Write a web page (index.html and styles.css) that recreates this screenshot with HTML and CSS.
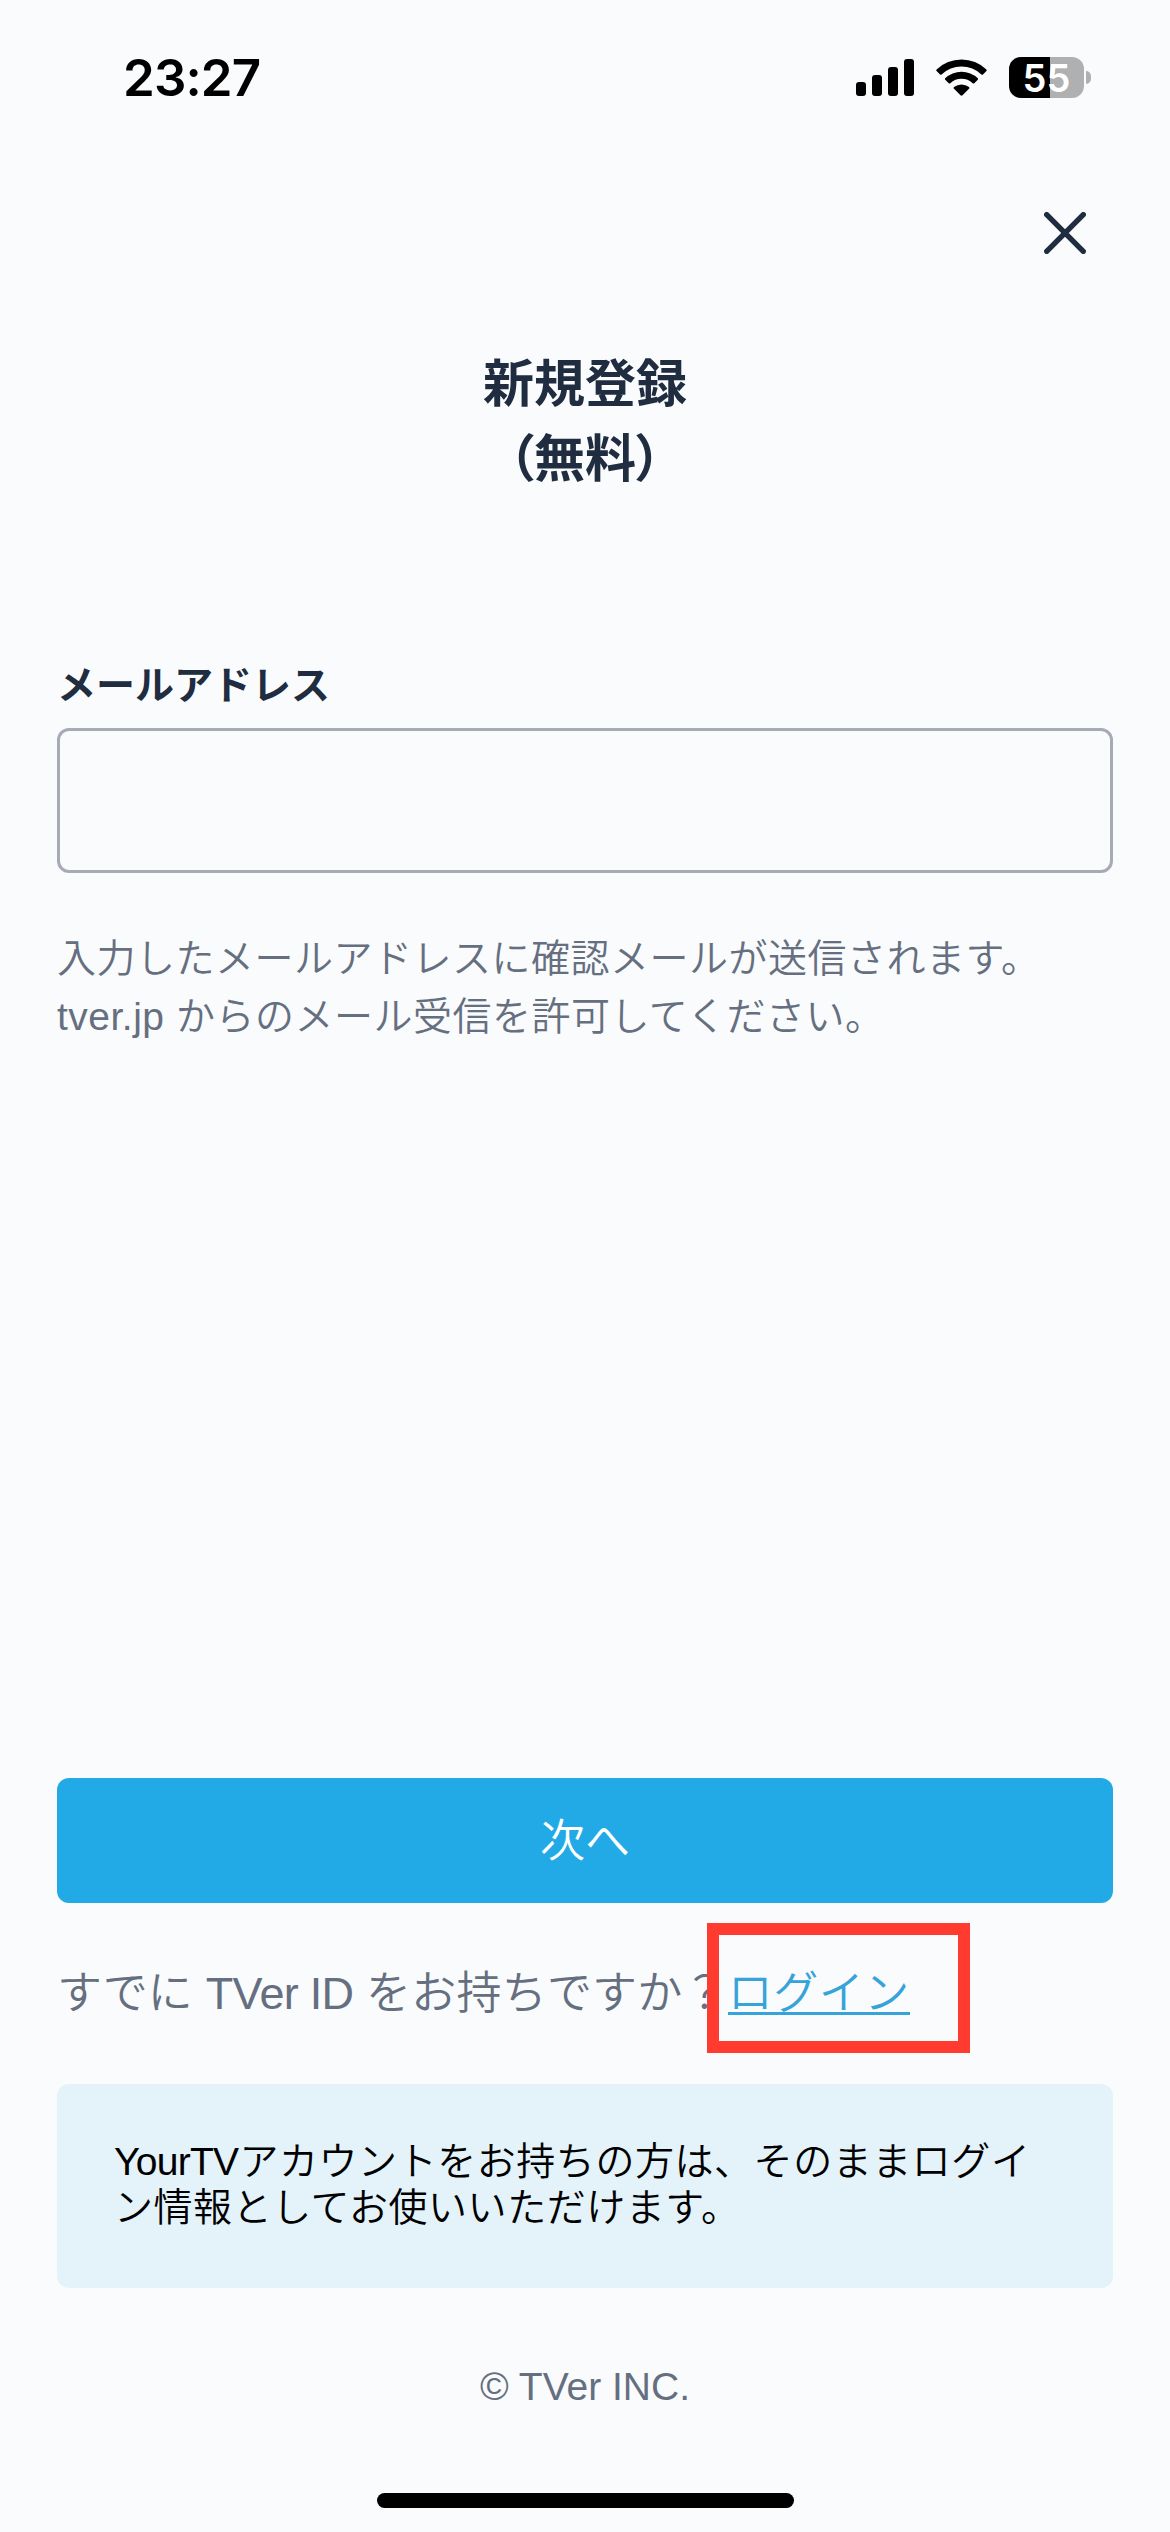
FILE: index.html
```html
<!DOCTYPE html>
<html lang="ja">
<head>
<meta charset="utf-8">
<title>新規登録</title>
<link rel="stylesheet" href="styles.css">
</head>
<body>
<div class="screen">
  <header class="status">
    <span class="time">23:27</span>
    <div class="indicators">
      <svg class="signal" width="58" height="37" viewBox="0 0 58 37">
        <rect x="0" y="23" width="10" height="14" rx="3"/>
        <rect x="16" y="16" width="10" height="21" rx="3"/>
        <rect x="32" y="8" width="10" height="29" rx="3"/>
        <rect x="48" y="0" width="10" height="37" rx="3"/>
      </svg>
      <svg class="wifi" width="51" height="37" viewBox="0 0 51 37">
        <path d="M0.6 10.4Q-0.1 11.2 0.6 12L4 15.5Q4.8 16.2 5.6 15.5A28.6 28.6 0 0 1 45.4 15.5Q46.2 16.2 47 15.5L50.4 12Q51.1 11.2 50.4 10.4A36 36 0 0 0 0.6 10.4Z"/>
        <path d="M9.2 19.2Q8.5 20 9.2 20.8L12.7 24.2Q13.5 24.9 14.3 24.2A16.5 16.5 0 0 1 36.7 24.2Q37.5 24.9 38.3 24.2L41.8 20.8Q42.5 20 41.8 19.2A24 24 0 0 0 9.2 19.2Z"/>
        <path d="M18 28.1Q17.2 29 18 29.8L24.5 36.3Q25.5 37.2 26.5 36.3L33 29.8Q33.8 29 33 28.1A12 12 0 0 0 18 28.1Z"/>
      </svg>
      <div class="battery"><span class="level">55</span><span class="nub"></span></div>
    </div>
  </header>

  <div class="toolbar">
    <button class="close" aria-label="閉じる">
      <svg width="42" height="42" viewBox="0 0 42 42"><path d="M2.7 2.7L39.3 39.3M39.3 2.7L2.7 39.3"/></svg>
    </button>
  </div>

  <main class="content">
    <h1 class="title">新規登録<br><span class="paren-open">（</span>無料<span class="paren-close">）</span></h1>
    <label class="label" for="email">メールアドレス</label>
    <input class="field" id="email" type="email">
    <p class="hint">入力したメールアドレスに確認メールが送信されます。<br>tver.jp からのメール受信を許可してください。</p>
    <button class="next">次へ</button>
    <p class="login"><span>すでに <span class="latin">TVer ID</span> をお持ちですか？</span><a class="link" href="#">ログイン<span class="marker"></span></a></p>
    <div class="info"><span class="latin">YourTV</span>アカウントをお持ちの方は、そのままログイン情報としてお使いいただけます。</div>
  </main>
  <footer class="footer">© TVer INC.</footer>
  <div class="home"></div>
</div>
</body>
</html>
```
FILE: styles.css
```css
* { box-sizing: border-box; }
body { margin: 0; background: #fafbfd; }
.screen {
  width: 1170px;
  height: 2532px;
  display: flex;
  flex-direction: column;
  font-family: "Liberation Sans", "Noto Sans CJK JP", sans-serif;
  font-size: 39px;
  font-weight: 350;
  color: #656f80;
  overflow: hidden;
}
.status {
  height: 155px;
  padding: 0 79px 0 123px;
  display: flex;
  justify-content: space-between;
  align-items: center;
  color: #000;
  font-family: Inter, sans-serif;
}
.time { font-size: 51px; font-weight: 600; letter-spacing: -0.9px; }
.indicators { display: flex; align-items: center; }
.wifi { margin-left: 22px; }
.battery { display: flex; align-items: center; gap: 2px; margin-left: 22px; }
.level {
  width: 75px;
  height: 41px;
  border-radius: 12px;
  background: linear-gradient(90deg, #000 41px, #aeb0b1 41px);
  color: #fff;
  font-size: 38px;
  font-weight: 600;
  line-height: 42px;
  text-align: center;
}
.nub { width: 5px; height: 13px; border-radius: 0 6px 6px 0; background: #aeb0b1; }
.toolbar { display: flex; justify-content: flex-end; padding: 57px 84px 0; }
.close { width: 42px; height: 42px; padding: 0; border: 0; background: none; }
.close svg { display: block; fill: none; stroke: #202c40; stroke-width: 5.4; stroke-linecap: round; }
.content { padding: 0 57px; display: flex; flex-direction: column; }
.title {
  margin: 93px 0 0;
  font-size: 51px;
  line-height: 75px;
  font-weight: 700;
  text-align: center;
  color: #202c40;
}
.paren-open { margin-right: -2px; }
.paren-close { margin-left: -2px; }
.label { margin-top: 160px; line-height: 58px; font-weight: 700; color: #202c40; }
.field { margin-top: 13px; height: 145px; border: 3px solid #a6abb5; border-radius: 12px; background: transparent; padding: 0 36px; font: inherit; }
.hint { margin: 57px 0 0; line-height: 57.5px; letter-spacing: 0.5px; }
.next {
  margin-top: 733px;
  height: 125px;
  padding: 0 0 6px;
  border: 0;
  border-radius: 12px;
  background: #22aae6;
  color: #fff;
  font: 350 45px "Liberation Sans", "Noto Sans CJK JP", sans-serif;
}
.login { margin: 57px 0 0; font-size: 45px; line-height: 68px; letter-spacing: 0.2px; white-space: nowrap; }
.latin { letter-spacing: -0.7px; }
.link { position: relative; color: #36a3d9; letter-spacing: 0.5px; text-decoration: none; display: inline-block; height: 55px; border-bottom: 3px solid #36a3d9; }
.marker { position: absolute; left: -21px; top: -37px; width: 263px; height: 130px; border: 12px solid #ff3b30; }
.info {
  margin-top: 56px;
  height: 204px;
  padding: 55px 57px;
  border-radius: 12px;
  background: #e4f2fa;
  color: #000;
  line-height: 45.5px;
  letter-spacing: 0.55px;
}
.info .latin { margin-right: 1px; }
.footer { margin-top: 70px; line-height: 58px; text-align: center; }
.home { width: 417px; height: 15px; border-radius: 8px; background: #000; margin: 77px auto 0; }
```
